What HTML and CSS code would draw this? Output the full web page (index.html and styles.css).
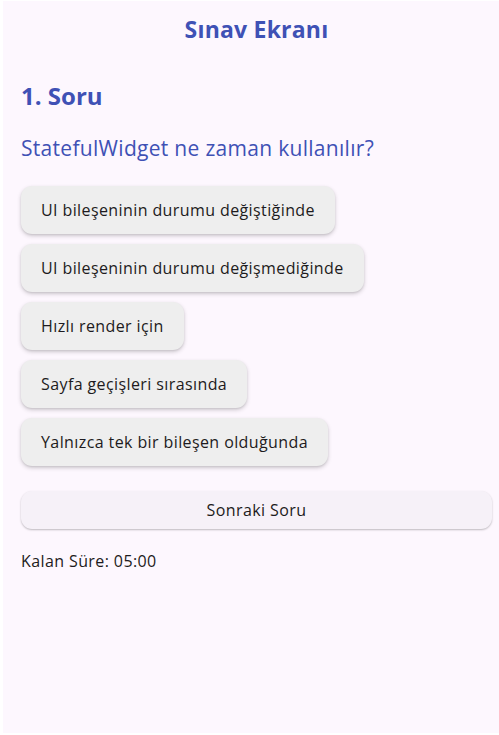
FILE: index.html
```html
<!DOCTYPE html>
<html lang="tr">
<head>
<meta charset="utf-8">
<title>Sınav Ekranı</title>
<link rel="stylesheet" href="styles.css">
</head>
<body>
<div class="app">
  <header class="appbar"><h1 class="appbar-title">Sınav Ekranı</h1></header>
  <main class="content">
    <h2 class="q-number">1. Soru</h2>
    <p class="q-text">StatefulWidget ne zaman kullanılır?</p>
    <div class="options">
      <button class="option">UI bileşeninin durumu değiştiğinde</button>
      <button class="option">UI bileşeninin durumu değişmediğinde</button>
      <button class="option">Hızlı render için</button>
      <button class="option">Sayfa geçişleri sırasında</button>
      <button class="option">Yalnızca tek bir bileşen olduğunda</button>
    </div>
    <button class="next">Sonraki Soru</button>
    <p class="timer">Kalan Süre: 05:00</p>
  </main>
</div>
</body>
</html>
```

FILE: styles.css
```css
html, body {
  margin: 0;
  padding: 0;
  background: #ffffff;
  height: 100%;
  overflow: hidden;
}
body {
  font-family: "Open Sans", "Noto Sans", sans-serif;
  color: #1d1b20;
}
.app {
  margin: 1px 0 2px 3px;
  width: 507px;
  height: 732px;
  background: #fdf7fe;
  display: flex;
  flex-direction: column;
}
.appbar {
  height: 56px;
  display: flex;
  align-items: center;
  justify-content: center;
}
.appbar-title {
  margin: 0;
  font-size: 23px;
  font-weight: 700;
  letter-spacing: 0.2px;
  color: #3f51b5;
}
.content {
  padding: 23px 18px 0 18px;
  display: flex;
  flex-direction: column;
  align-items: flex-start;
}
.q-number {
  margin: 0;
  font-size: 24px;
  line-height: 32px;
  font-weight: 700;
  color: #3f51b5;
}
.q-text {
  margin: 22px 0 0;
  font-size: 21px;
  line-height: 28px;
  letter-spacing: 0.3px;
  color: #3f51b5;
}
.options {
  margin-top: 24px;
  display: flex;
  flex-direction: column;
  align-items: flex-start;
  gap: 10px;
}
.option {
  font-family: inherit;
  font-size: 16px;
  letter-spacing: 0.4px;
  color: #1d1b20;
  background: #eeeeee;
  border: none;
  border-radius: 11px;
  height: 48px;
  padding: 0 20px;
  box-shadow: 0 2px 4px rgba(0, 0, 0, 0.18), 0 1px 2px rgba(0, 0, 0, 0.08);
}
.next {
  margin-top: 25px;
  align-self: stretch;
  font-family: inherit;
  font-size: 16px;
  letter-spacing: 0.4px;
  color: #1d1b20;
  background: #f6f1f8;
  border: none;
  border-radius: 11px;
  height: 38px;
  box-shadow: 0 1px 2px rgba(0, 0, 0, 0.25);
}
.timer {
  margin: 22px 0 0;
  font-size: 16px;
  line-height: 20px;
  letter-spacing: 0.4px;
}
```
